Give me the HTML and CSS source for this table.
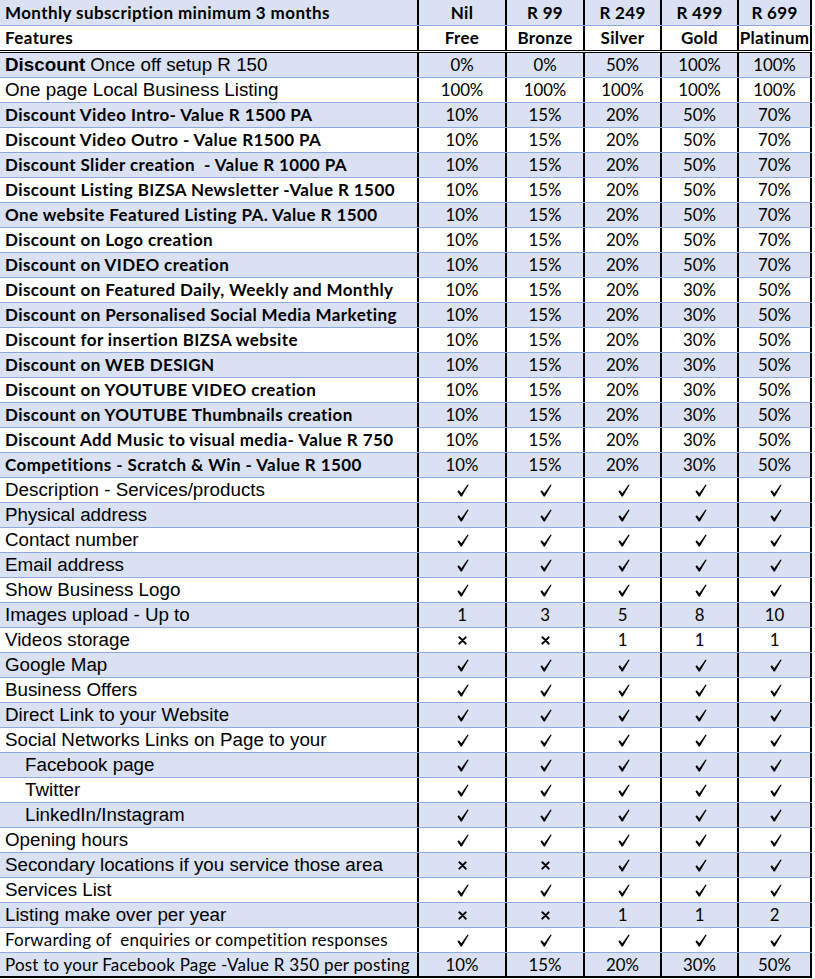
FILE: index.html
```html
<!DOCTYPE html>
<html>
<head>
<meta charset="utf-8">
<link rel="stylesheet" href="styles.css">
</head>
<body>
<svg class="defs" width="0" height="0">
  <defs>
    <symbol id="ck" viewBox="0 0 12 13">
      <path d="M0.4 7.4 L1.9 6.3 L4.3 9.3 L10.6 0.4 L11.6 1.1 L4.9 12.6 L3.7 12.6 Z" fill="#000"/>
    </symbol>
    <symbol id="xx" viewBox="0 0 10 10">
      <path d="M1.5 1.5 Q5 4.5 8.5 8.5 M8.5 1.5 Q5 5 1.5 8.5" stroke="#000" stroke-width="2.2" fill="none" stroke-linecap="round"/>
    </symbol>
  </defs>
</svg>
<div class="sheet">
  <div class="row hd1 blue"><div class="c cb">Monthly subscription minimum 3 months</div><div class="v vb">Nil</div><div class="v vb">R 99</div><div class="v vb">R 249</div><div class="v vb">R 499</div><div class="v vb">R 699</div></div>
  <div class="row hd2"><div class="c cb">Features</div><div class="v vb">Free</div><div class="v vb">Bronze</div><div class="v vb">Silver</div><div class="v vb">Gold</div><div class="v vb">Platinum</div></div>

  <div class="row blue"><div class="c ca"><b>Discount</b> Once off setup R 150</div><div class="v">0%</div><div class="v">0%</div><div class="v">50%</div><div class="v">100%</div><div class="v">100%</div></div>
  <div class="row"><div class="c ca">One page Local Business Listing</div><div class="v">100%</div><div class="v">100%</div><div class="v">100%</div><div class="v">100%</div><div class="v">100%</div></div>
  <div class="row blue"><div class="c cb">Discount Video Intro- Value R 1500 PA</div><div class="v">10%</div><div class="v">15%</div><div class="v">20%</div><div class="v">50%</div><div class="v">70%</div></div>
  <div class="row"><div class="c cb">Discount Video Outro - Value R1500 PA</div><div class="v">10%</div><div class="v">15%</div><div class="v">20%</div><div class="v">50%</div><div class="v">70%</div></div>
  <div class="row blue"><div class="c cb">Discount Slider creation&nbsp; - Value R 1000 PA</div><div class="v">10%</div><div class="v">15%</div><div class="v">20%</div><div class="v">50%</div><div class="v">70%</div></div>
  <div class="row"><div class="c cb">Discount Listing BIZSA Newsletter -Value R 1500</div><div class="v">10%</div><div class="v">15%</div><div class="v">20%</div><div class="v">50%</div><div class="v">70%</div></div>
  <div class="row blue"><div class="c cb">One website Featured Listing PA. Value R 1500</div><div class="v">10%</div><div class="v">15%</div><div class="v">20%</div><div class="v">50%</div><div class="v">70%</div></div>
  <div class="row"><div class="c cb">Discount on Logo creation</div><div class="v">10%</div><div class="v">15%</div><div class="v">20%</div><div class="v">50%</div><div class="v">70%</div></div>
  <div class="row blue"><div class="c cb">Discount on VIDEO creation</div><div class="v">10%</div><div class="v">15%</div><div class="v">20%</div><div class="v">50%</div><div class="v">70%</div></div>
  <div class="row"><div class="c cb">Discount on Featured Daily, Weekly and Monthly</div><div class="v">10%</div><div class="v">15%</div><div class="v">20%</div><div class="v">30%</div><div class="v">50%</div></div>
  <div class="row blue"><div class="c cb">Discount on Personalised Social Media Marketing</div><div class="v">10%</div><div class="v">15%</div><div class="v">20%</div><div class="v">30%</div><div class="v">50%</div></div>
  <div class="row"><div class="c cb">Discount for insertion BIZSA website</div><div class="v">10%</div><div class="v">15%</div><div class="v">20%</div><div class="v">30%</div><div class="v">50%</div></div>
  <div class="row blue"><div class="c cb">Discount on WEB DESIGN</div><div class="v">10%</div><div class="v">15%</div><div class="v">20%</div><div class="v">30%</div><div class="v">50%</div></div>
  <div class="row"><div class="c cb">Discount on YOUTUBE VIDEO creation</div><div class="v">10%</div><div class="v">15%</div><div class="v">20%</div><div class="v">30%</div><div class="v">50%</div></div>
  <div class="row blue"><div class="c cb">Discount on YOUTUBE Thumbnails creation</div><div class="v">10%</div><div class="v">15%</div><div class="v">20%</div><div class="v">30%</div><div class="v">50%</div></div>
  <div class="row"><div class="c cb">Discount Add Music to visual media- Value R 750</div><div class="v">10%</div><div class="v">15%</div><div class="v">20%</div><div class="v">30%</div><div class="v">50%</div></div>
  <div class="row blue"><div class="c cb">Competitions - Scratch &amp; Win - Value R 1500</div><div class="v">10%</div><div class="v">15%</div><div class="v">20%</div><div class="v">30%</div><div class="v">50%</div></div>

  <div class="row"><div class="c ca">Description - Services/products</div><div class="v"><svg class="ck"><use href="#ck"/></svg></div><div class="v"><svg class="ck"><use href="#ck"/></svg></div><div class="v"><svg class="ck"><use href="#ck"/></svg></div><div class="v"><svg class="ck"><use href="#ck"/></svg></div><div class="v"><svg class="ck"><use href="#ck"/></svg></div></div>
  <div class="row blue"><div class="c ca">Physical address</div><div class="v"><svg class="ck"><use href="#ck"/></svg></div><div class="v"><svg class="ck"><use href="#ck"/></svg></div><div class="v"><svg class="ck"><use href="#ck"/></svg></div><div class="v"><svg class="ck"><use href="#ck"/></svg></div><div class="v"><svg class="ck"><use href="#ck"/></svg></div></div>
  <div class="row"><div class="c ca">Contact number</div><div class="v"><svg class="ck"><use href="#ck"/></svg></div><div class="v"><svg class="ck"><use href="#ck"/></svg></div><div class="v"><svg class="ck"><use href="#ck"/></svg></div><div class="v"><svg class="ck"><use href="#ck"/></svg></div><div class="v"><svg class="ck"><use href="#ck"/></svg></div></div>
  <div class="row blue"><div class="c ca">Email address</div><div class="v"><svg class="ck"><use href="#ck"/></svg></div><div class="v"><svg class="ck"><use href="#ck"/></svg></div><div class="v"><svg class="ck"><use href="#ck"/></svg></div><div class="v"><svg class="ck"><use href="#ck"/></svg></div><div class="v"><svg class="ck"><use href="#ck"/></svg></div></div>
  <div class="row"><div class="c ca">Show Business Logo</div><div class="v"><svg class="ck"><use href="#ck"/></svg></div><div class="v"><svg class="ck"><use href="#ck"/></svg></div><div class="v"><svg class="ck"><use href="#ck"/></svg></div><div class="v"><svg class="ck"><use href="#ck"/></svg></div><div class="v"><svg class="ck"><use href="#ck"/></svg></div></div>
  <div class="row blue"><div class="c ca">Images upload - Up to</div><div class="v">1</div><div class="v">3</div><div class="v">5</div><div class="v">8</div><div class="v">10</div></div>
  <div class="row"><div class="c ca">Videos storage</div><div class="v"><svg class="xx"><use href="#xx"/></svg></div><div class="v"><svg class="xx"><use href="#xx"/></svg></div><div class="v">1</div><div class="v">1</div><div class="v">1</div></div>
  <div class="row blue"><div class="c ca">Google Map</div><div class="v"><svg class="ck"><use href="#ck"/></svg></div><div class="v"><svg class="ck"><use href="#ck"/></svg></div><div class="v"><svg class="ck"><use href="#ck"/></svg></div><div class="v"><svg class="ck"><use href="#ck"/></svg></div><div class="v"><svg class="ck"><use href="#ck"/></svg></div></div>
  <div class="row"><div class="c ca">Business Offers</div><div class="v"><svg class="ck"><use href="#ck"/></svg></div><div class="v"><svg class="ck"><use href="#ck"/></svg></div><div class="v"><svg class="ck"><use href="#ck"/></svg></div><div class="v"><svg class="ck"><use href="#ck"/></svg></div><div class="v"><svg class="ck"><use href="#ck"/></svg></div></div>
  <div class="row blue"><div class="c ca">Direct Link to your Website</div><div class="v"><svg class="ck"><use href="#ck"/></svg></div><div class="v"><svg class="ck"><use href="#ck"/></svg></div><div class="v"><svg class="ck"><use href="#ck"/></svg></div><div class="v"><svg class="ck"><use href="#ck"/></svg></div><div class="v"><svg class="ck"><use href="#ck"/></svg></div></div>
  <div class="row"><div class="c ca">Social Networks Links on Page to your</div><div class="v"><svg class="ck"><use href="#ck"/></svg></div><div class="v"><svg class="ck"><use href="#ck"/></svg></div><div class="v"><svg class="ck"><use href="#ck"/></svg></div><div class="v"><svg class="ck"><use href="#ck"/></svg></div><div class="v"><svg class="ck"><use href="#ck"/></svg></div></div>
  <div class="row blue"><div class="c ca ind">Facebook page</div><div class="v"><svg class="ck"><use href="#ck"/></svg></div><div class="v"><svg class="ck"><use href="#ck"/></svg></div><div class="v"><svg class="ck"><use href="#ck"/></svg></div><div class="v"><svg class="ck"><use href="#ck"/></svg></div><div class="v"><svg class="ck"><use href="#ck"/></svg></div></div>
  <div class="row"><div class="c ca ind">Twitter</div><div class="v"><svg class="ck"><use href="#ck"/></svg></div><div class="v"><svg class="ck"><use href="#ck"/></svg></div><div class="v"><svg class="ck"><use href="#ck"/></svg></div><div class="v"><svg class="ck"><use href="#ck"/></svg></div><div class="v"><svg class="ck"><use href="#ck"/></svg></div></div>
  <div class="row blue"><div class="c ca ind">LinkedIn/Instagram</div><div class="v"><svg class="ck"><use href="#ck"/></svg></div><div class="v"><svg class="ck"><use href="#ck"/></svg></div><div class="v"><svg class="ck"><use href="#ck"/></svg></div><div class="v"><svg class="ck"><use href="#ck"/></svg></div><div class="v"><svg class="ck"><use href="#ck"/></svg></div></div>
  <div class="row"><div class="c ca">Opening hours</div><div class="v"><svg class="ck"><use href="#ck"/></svg></div><div class="v"><svg class="ck"><use href="#ck"/></svg></div><div class="v"><svg class="ck"><use href="#ck"/></svg></div><div class="v"><svg class="ck"><use href="#ck"/></svg></div><div class="v"><svg class="ck"><use href="#ck"/></svg></div></div>
  <div class="row blue"><div class="c ca">Secondary locations if you service those area</div><div class="v"><svg class="xx"><use href="#xx"/></svg></div><div class="v"><svg class="xx"><use href="#xx"/></svg></div><div class="v"><svg class="ck"><use href="#ck"/></svg></div><div class="v"><svg class="ck"><use href="#ck"/></svg></div><div class="v"><svg class="ck"><use href="#ck"/></svg></div></div>
  <div class="row"><div class="c ca">Services List</div><div class="v"><svg class="ck"><use href="#ck"/></svg></div><div class="v"><svg class="ck"><use href="#ck"/></svg></div><div class="v"><svg class="ck"><use href="#ck"/></svg></div><div class="v"><svg class="ck"><use href="#ck"/></svg></div><div class="v"><svg class="ck"><use href="#ck"/></svg></div></div>
  <div class="row blue"><div class="c ca">Listing make over per year</div><div class="v"><svg class="xx"><use href="#xx"/></svg></div><div class="v"><svg class="xx"><use href="#xx"/></svg></div><div class="v">1</div><div class="v">1</div><div class="v">2</div></div>
  <div class="row"><div class="c cn">Forwarding of&nbsp; enquiries or competition responses</div><div class="v"><svg class="ck"><use href="#ck"/></svg></div><div class="v"><svg class="ck"><use href="#ck"/></svg></div><div class="v"><svg class="ck"><use href="#ck"/></svg></div><div class="v"><svg class="ck"><use href="#ck"/></svg></div><div class="v"><svg class="ck"><use href="#ck"/></svg></div></div>
  <div class="row blue last"><div class="c cn">Post to your Facebook Page -Value R 350 per posting</div><div class="v">10%</div><div class="v">15%</div><div class="v">20%</div><div class="v">30%</div><div class="v">50%</div></div>
</div>
</body>
</html>
```

FILE: styles.css
```css
html, body {
  margin: 0;
  padding: 0;
  background: #fff;
}
.defs {
  display: block;
  width: 0;
  height: 0;
  overflow: hidden;
}
.sheet {
  display: flex;
  flex-direction: column;
  width: 812px;
  color: #000;
}
.row {
  display: grid;
  grid-template-columns: 417px 88px 78px 77px 77px 75px;
  height: 25px;
  box-sizing: border-box;
  border-bottom: 1px solid #8ea9db;
  background: #fff;
}
.row.blue {
  background: #d9e1f2;
}
.row.hd1 {
  height: 26px;
}
.row.hd2 {
  height: 27px;
  border-bottom: 3px double #000;
}
.row.last {
  border-bottom: 2px solid #000;
}
.c {
  padding-left: 5px;
  white-space: nowrap;
  overflow: hidden;
  display: flex;
  align-items: center;
  line-height: 24px;
}
.cb {
  font-family: Lato, "Liberation Sans", sans-serif;
  font-weight: 700;
  font-size: 17px;
  letter-spacing: 0.4px;
}
.ca {
  font-family: "Liberation Sans", Arial, sans-serif;
  font-size: 18.8px;
}
.ca b {
  font-weight: 700;
  margin-right: 5px;
}
.cn {
  font-family: Lato, "Liberation Sans", sans-serif;
  font-size: 17px;
  letter-spacing: 0.2px;
}
.ind {
  padding-left: 25px;
}
.v {
  border-left: 2px solid #000;
  display: flex;
  align-items: center;
  justify-content: center;
  font-family: Lato, "Liberation Sans", sans-serif;
  font-size: 16.8px;
  line-height: 24px;
}
.v:last-child {
  border-right: 2px solid #000;
}
.vb {
  font-weight: 700;
  font-size: 17px;
  letter-spacing: 0.3px;
}
.ck {
  width: 12px;
  height: 13px;
  margin-left: 2px;
}
.xx {
  width: 9px;
  height: 9px;
  margin-left: 1px;
}
```
